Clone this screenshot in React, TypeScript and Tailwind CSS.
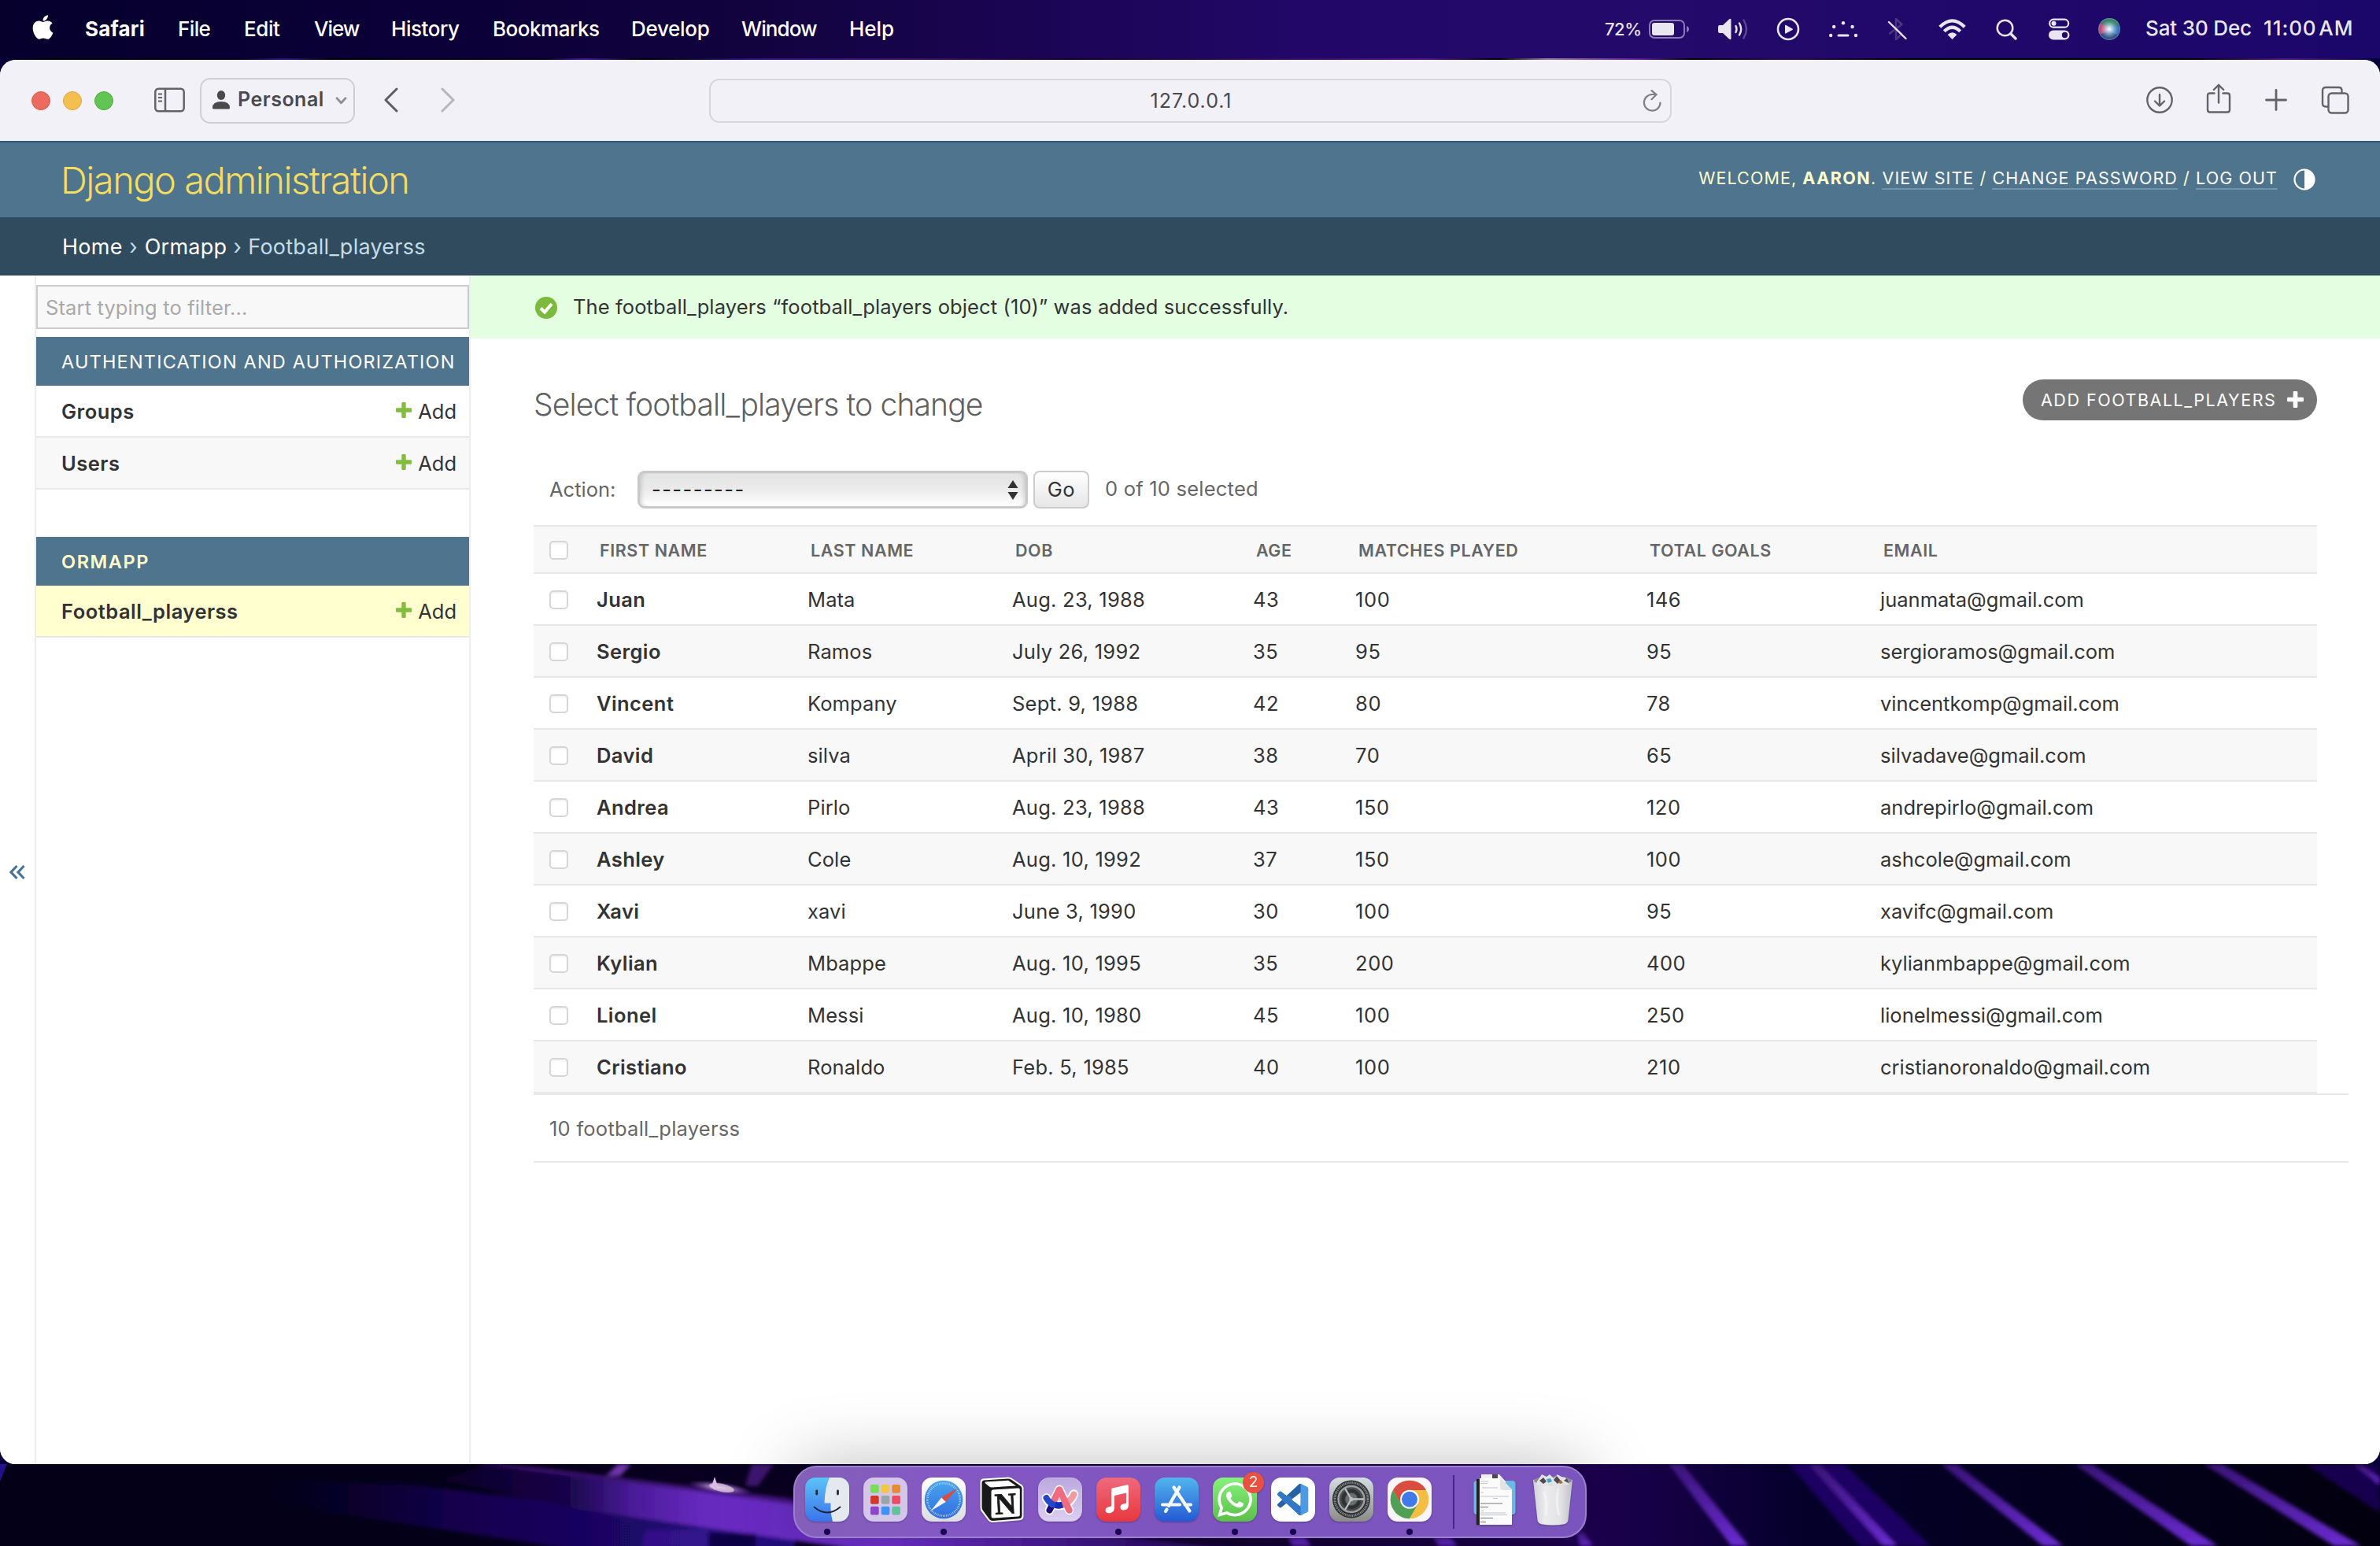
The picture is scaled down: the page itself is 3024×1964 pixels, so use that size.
import type { ReactNode } from "react";
import { FaApple, FaWhatsapp } from "react-icons/fa";

const players = [
  ["Juan", "Mata", "Aug. 23, 1988", "43", "100", "146", "juanmata@gmail.com"],
  ["Sergio", "Ramos", "July 26, 1992", "35", "95", "95", "sergioramos@gmail.com"],
  ["Vincent", "Kompany", "Sept. 9, 1988", "42", "80", "78", "vincentkomp@gmail.com"],
  ["David", "silva", "April 30, 1987", "38", "70", "65", "silvadave@gmail.com"],
  ["Andrea", "Pirlo", "Aug. 23, 1988", "43", "150", "120", "andrepirlo@gmail.com"],
  ["Ashley", "Cole", "Aug. 10, 1992", "37", "150", "100", "ashcole@gmail.com"],
  ["Xavi", "xavi", "June 3, 1990", "30", "100", "95", "xavifc@gmail.com"],
  ["Kylian", "Mbappe", "Aug. 10, 1995", "35", "200", "400", "kylianmbappe@gmail.com"],
  ["Lionel", "Messi", "Aug. 10, 1980", "45", "100", "250", "lionelmessi@gmail.com"],
  ["Cristiano", "Ronaldo", "Feb. 5, 1985", "40", "100", "210", "cristianoronaldo@gmail.com"],
];
const headings = ["FIRST NAME", "LAST NAME", "DOB", "AGE", "MATCHES PLAYED", "TOTAL GOALS", "EMAIL"];

/* ---------- macOS menu bar ---------- */

function MenuBar() {
  return (
    <header className="flex h-[74px] items-center justify-between bg-[linear-gradient(90deg,#05002c_0%,#0b0038_18%,#12033f_32%,#220768_55%,#230a6b_70%,#1b0669_100%)] text-[26px] font-medium text-white">
      <nav className="flex items-center pb-[2px]">
        <FaApple className="ml-[37px] mr-[36px] mt-[-3px] size-[35px]" />
        <span className="w-[118px] font-bold tracking-[0.200px]">Safari</span>
        <span className="w-[84px] tracking-[-0.600px]">File</span>
        <span className="w-[89px] tracking-[-0.400px]">Edit</span>
        <span className="w-[98px] tracking-[-1px]">View</span>
        <span className="w-[129px] tracking-[-0.450px]">History</span>
        <span className="w-[176px] tracking-[-0.480px]">Bookmarks</span>
        <span className="w-[140px] tracking-[-0.300px]">Develop</span>
        <span className="w-[137px] tracking-[-0.900px]">Window</span>
        <span className="tracking-[-0.100px]">Help</span>
      </nav>
      <div className="flex items-center text-[#e9e6f2]">
        <span className="w-[56px] text-[22px] tracking-[-0.500px]">72%</span>
        <svg className="mr-[35px] h-[24px] w-[52px]" viewBox="0 0 52 24" fill="none">
          <rect x="1" y="1" width="44" height="22" rx="6" stroke="#8b7bb5" strokeWidth="2" />
          <rect x="4" y="4" width="28" height="16" rx="3" fill="#e9e6f2" />
          <path d="M48 8c4 1.200 4 6.800 0 8z" fill="#8b7bb5" />
        </svg>
        <svg className="mr-[35px] h-[30px] w-[40px]" viewBox="0 0 40 30" fill="none" stroke="#e9e6f2" strokeWidth="2.400" strokeLinecap="round">
          <path d="M1 12q0-2 2-2h4l8-7.500q2.500-2 2.500 1v23q0 3-2.500 1l-8-7.500H3q-2 0-2-2z" fill="#e9e6f2" stroke="none" />
          <path d="M23.500 11q2 4 0 8M28 7.500q4.400 7.500 0 15" />
          <path d="M33.500 3.500q7 11.500 0 23" stroke="#5d4890" />
        </svg>
        <svg className="mr-[37px] size-[30px]" viewBox="0 0 30 30" fill="none">
          <circle cx="15" cy="15" r="13" stroke="#e9e6f2" strokeWidth="2.600" />
          <path d="M11 10.500v9.500q0 1 1 .500l8.500-4.500q1-.700 0-1.500L12 9.800q-1-.500-1 .700z" fill="#e9e6f2" />
        </svg>
        <svg className="mr-[37px] mt-[2px] h-[22px] w-[37px]" viewBox="0 0 37 22" fill="#e9e6f2">
          <circle cx="2.200" cy="18" r="2.200" />
          <circle cx="6.200" cy="7" r="2.200" />
          <circle cx="18" cy="2.200" r="2.200" />
          <circle cx="29.600" cy="7" r="2.200" />
          <circle cx="34" cy="18" r="2.200" />
          <rect x="10.500" y="16.600" width="15" height="3" rx="1.500" />
        </svg>
        <svg className="mr-[40px] h-[30px] w-[25px]" viewBox="0 0 25 30" fill="none" strokeLinecap="round" strokeLinejoin="round">
          <path d="M3 20.500 18.500 9 11 2v26l7.500-7L11 14.500" stroke="#4d3680" strokeWidth="2.400" />
          <path d="M2 6 23.500 27" stroke="#e9e6f2" strokeWidth="2.400" />
        </svg>
        <svg className="mr-[38px] mt-[-1px] h-[26px] w-[35px]" viewBox="0 0 35 26" fill="none" stroke="#e9e6f2" strokeWidth="4.200">
          <path d="M1.800 10.200q15.700-15.800 31.400 0" />
          <path d="M7.300 15.700q10.200-10 20.400 0" />
          <path d="M11.600 20q5.900-5.600 11.800 0l-5.900 6z" fill="#e9e6f2" stroke="none" />
        </svg>
        <svg className="mr-[39px] size-[27px]" viewBox="0 0 27 27" fill="none" stroke="#e9e6f2" strokeLinecap="round">
          <circle cx="11.500" cy="11.500" r="9.800" strokeWidth="2.500" />
          <path d="m19 19 6 6" strokeWidth="3.400" />
        </svg>
        <svg className="mr-[36px] h-[28px] w-[28px]" viewBox="0 0 28 28" fill="none">
          <rect x="2.200" y="1.700" width="24" height="10" rx="5" stroke="#e9e6f2" strokeWidth="2.200" />
          <circle cx="7.500" cy="6.700" r="3" fill="#e9e6f2" />
          <rect x="1" y="15.500" width="26.500" height="12" rx="6" fill="#e9e6f2" />
          <circle cx="21.500" cy="21.500" r="3.700" fill="#220969" />
        </svg>
        <svg className="mr-[32px] size-[28px]" viewBox="0 0 28 28">
          <defs>
            <radialGradient id="siriGlow" cx="0.500" cy="0.500" r="0.450">
              <stop offset="0" stopColor="#ffffff" />
              <stop offset="0.350" stopColor="#d6efff" stopOpacity="0.700" />
              <stop offset="1" stopColor="#8fd0ff" stopOpacity="0" />
            </radialGradient>
          </defs>
          <circle cx="14" cy="14" r="14" fill="#35507f" />
          <path d="M14 14Q1 8 3 5.500Q8 0 14 0Q24 0 26.500 8Q22 14 14 14z" fill="#3a7f62" />
          <path d="M14 14Q8 6 2 7Q-1 14 2 20Q8 20 14 14z" fill="#c94471" />
          <path d="M14 14Q20 8 27 10Q28 18 24 21Q18 20 14 14z" fill="#3873b8" />
          <circle cx="14" cy="14" r="13" fill="url(#siriGlow)" />
          <circle cx="14" cy="14" r="13.300" fill="none" stroke="#6ba0c8" strokeOpacity="0.500" strokeWidth="1.200" />
        </svg>
        <span className="mt-[-3px] w-[150px] whitespace-nowrap tracking-[-0.150px]">Sat 30 Dec</span>
        <span className="mt-[-3px] w-[148px] whitespace-nowrap tracking-[0.900px] [word-spacing:-5px]">11:00 AM</span>
      </div>
    </header>
  );
}

/* ---------- Safari toolbar ---------- */

function SafariToolbar() {
  return (
    <div className="flex h-[105px] items-center border-b-2 border-[#2f5573] bg-[#f2f1f7] text-[#646366]">
      <div className="flex w-[901px] items-center">
        <div className="ml-[40px] flex gap-4">
          <span className="size-[24px] rounded-full border border-[#d9564c] bg-[#ed6a5e]" />
          <span className="size-[24px] rounded-full border border-[#dba63c] bg-[#f5bf4f]" />
          <span className="size-[24px] rounded-full border border-[#52a83f] bg-[#61c554]" />
        </div>
        <svg className="ml-[52px] mt-[-1px] h-[32px] w-[39px]" viewBox="0 0 39 32" fill="none" stroke="currentColor" strokeWidth="2.500">
          <rect x="1.300" y="1.700" width="36.400" height="28.600" rx="4" />
          <path d="M14 2v28" />
          <path d="M5 8.500h5M5 13h5M5 17.500h5" strokeWidth="2" />
        </svg>
        <button className="ml-[19px] flex h-[58px] w-[197px] items-center rounded-[13px] border-2 border-[#cfced2] pl-[14px] text-[25px] font-semibold tracking-[0.500px] text-[#4a494c]">
          <svg className="mr-[10px] mt-[-2px] h-[24px] w-[22px]" viewBox="0 0 22 24" fill="currentColor">
            <ellipse cx="11" cy="6" rx="5.200" ry="6" />
            <path d="M0 22q0-8 11-8t11 8q0 1.500-1.500 1.500h-19Q0 23.500 0 22z" />
          </svg>
          <span className="mt-[-1px]">Personal</span>
          <svg className="ml-[14px] h-[10px] w-[15px]" viewBox="0 0 15 10" fill="none" stroke="#8f8e93" strokeWidth="2.800" strokeLinecap="round" strokeLinejoin="round">
            <path d="m2 1.800 5.500 6L13 1.800" />
          </svg>
        </button>
        <svg className="ml-[37px] mt-[-1px] h-[32px] w-[18px]" viewBox="0 0 18 32" fill="none" stroke="#5e5d60" strokeWidth="3" strokeLinecap="round" strokeLinejoin="round">
          <path d="M16 2 2 16l14 14" />
        </svg>
        <svg className="ml-[54px] mt-[-1px] h-[32px] w-[18px]" viewBox="0 0 18 32" fill="none" stroke="#b7b6ba" strokeWidth="3" strokeLinecap="round" strokeLinejoin="round">
          <path d="m2 2 14 14L2 30" />
        </svg>
      </div>
      <div className="relative flex h-[56px] w-[1223px] items-center justify-center rounded-[13px] border-2 border-[#d6d5da] pl-[2px] pt-[2px] text-[25px] tracking-[1px] text-[#4a494c]">
        127.0.0.1
        <svg className="absolute right-[11px] top-[12px] h-[28px] w-[24px]" viewBox="0 0 24 28" fill="none" stroke="#808084" strokeWidth="2.200" strokeLinecap="round" strokeLinejoin="round">
          <path d="M22.500 16.500A10.300 10.300 0 1 1 12 6h5.500" />
          <path d="m11.500 1.200 6 5-6 6" />
        </svg>
      </div>
      <svg className="ml-[602px] mt-[-2px] size-[36px]" viewBox="0 0 36 36" fill="none" stroke="currentColor" strokeWidth="2.400" strokeLinecap="round" strokeLinejoin="round">
        <circle cx="18" cy="18" r="15.700" />
        <path d="M18 11v14M12 19.500l6 6 6-6" />
      </svg>
      <svg className="ml-[41px] mt-[-5px] h-[38px] w-[32px]" viewBox="0 0 32 38" fill="none" stroke="currentColor" strokeWidth="2.400" strokeLinecap="round" strokeLinejoin="round">
        <path d="M10.500 12.500H5q-3 0-3 3v18q0 3 3 3h22q3 0 3-3v-18q0-3-3-3h-5.500" />
        <path d="M16 24.500V2M9.800 8 16 1.800 22.200 8" />
      </svg>
      <svg className="ml-[42px] mt-[-2px] size-[30px]" viewBox="0 0 30 30" fill="none" stroke="currentColor" strokeWidth="2.800" strokeLinecap="round">
        <path d="M15 2.500v25M2.500 15h25" />
      </svg>
      <svg className="ml-[42px] mt-[-2px] size-[36px]" viewBox="0 0 36 36" fill="none" stroke="currentColor" strokeWidth="2.400">
        <rect x="9.500" y="9.500" width="25" height="25" rx="4" />
        <path d="M9 26.500H6q-4 0-4-4V6q0-4 4-4h16.500q4 0 4 4v3" />
      </svg>
    </div>
  );
}

/* ---------- Django admin ---------- */

function DjangoHeader() {
  return (
    <>
      <div className="flex h-[95px] items-center justify-between bg-[#4f748e] pl-[77px] pr-[82px]">
        <h1 className="pt-[2px] text-[47px] font-[350] tracking-[-1.500px] text-[#f5dd5d]">Django administration</h1>
        <div className="mt-[-4px] flex items-center text-[21.500px] tracking-[1.080px] text-[#ffffcc]">
          <span className="whitespace-nowrap">
            WELCOME, <b className="font-bold tracking-[1.450px]">AARON</b>.{" "}
            <a className="border-b-2 border-[#7692a7] text-white">VIEW SITE</a> /{" "}
            <a className="border-b-2 border-[#7692a7] text-white">CHANGE PASSWORD</a> /{" "}
            <a className="border-b-2 border-[#7692a7] text-white">LOG OUT</a>
          </span>
          <svg className="ml-[20px] mt-[3px] size-[28px]" viewBox="0 0 28 28">
            <circle cx="14" cy="14" r="12.500" fill="none" stroke="#fff" strokeWidth="2.200" />
            <path d="M14 1.500a12.500 12.500 0 0 1 0 25z" fill="#fff" />
          </svg>
        </div>
      </div>
      <div className="flex h-[74px] items-center bg-[#2f4b5d] pl-[79px] pt-[3px] text-[27px] tracking-[0.250px] text-[#c4dce8]">
        <span className="text-white">Home</span>
        <span className="w-[28px] text-center">›</span>
        <span className="text-white">Ormapp</span>
        <span className="w-[27px] text-center">›</span>
        <span>Football_playerss</span>
      </div>
    </>
  );
}

function PlusMark({ className }: { className: string }) {
  return (
    <svg className={className} viewBox="0 0 22 22" fill="currentColor">
      <path d="M9.500 1h3q1.200 0 1.200 1.200v6.100h6.100Q21 8.300 21 9.500v3q0 1.200-1.200 1.200h-6.100v6.100q0 1.200-1.200 1.200h-3q-1.200 0-1.200-1.200v-6.100H2.200Q1 13.700 1 12.500v-3q0-1.200 1.200-1.200h6.100V2.200Q8.300 1 9.500 1z" />
    </svg>
  );
}

function SideRow({ name, tone }: { name: string; tone: string }) {
  return (
    <div className={`flex h-[66px] items-center justify-between border-b-2 border-[#e8e8e8] pl-8 pr-4 pt-[2px] text-[25.500px] text-[#333] ${tone}`}>
      <span className="font-semibold tracking-[0.500px]">{name}</span>
      <span className="flex items-center">
        <PlusMark className="mr-[7px] mt-[-4px] size-[22px] text-[#84bc40]" />
        Add
      </span>
    </div>
  );
}

function Sidebar() {
  return (
    <aside className="flex w-[598px] border-r-2 border-[#ededed] bg-white">
      <div className="flex w-[46px] items-center justify-center border-r-2 border-[#ededed] pt-[6px]">
        <svg className="size-[24px]" viewBox="0 0 24 24" fill="none" stroke="#4a7390" strokeWidth="3.200">
          <path d="M11.500 4 4 12l7.500 8M20.500 4 13 12l7.500 8" />
        </svg>
      </div>
      <div className="flex-1 pt-3">
        <input
          className="block h-[56px] w-full border-2 border-[#ccc] bg-[#f8f8f8] pl-[10px] text-[25.500px] tracking-[0.130px] placeholder:text-[#a9a9a9]"
          placeholder="Start typing to filter..."
        />
        <section className="mt-[10px]">
          <h2 className="flex h-[62px] items-center whitespace-nowrap bg-[#4f748e] pl-8 pt-[2px] text-[23.500px] tracking-[1.180px] text-white">AUTHENTICATION AND AUTHORIZATION</h2>
          <SideRow name="Groups" tone="bg-white" />
          <SideRow name="Users" tone="bg-[#f8f8f8]" />
        </section>
        <section className="mt-[60px]">
          <h2 className="flex h-[62px] items-center bg-[#4f748e] pl-8 pt-[2px] text-[23.500px] font-semibold tracking-[1.600px] text-[#ffffcc]">ORMAPP</h2>
          <SideRow name="Football_playerss" tone="bg-[#ffffd0]" />
        </section>
      </div>
    </aside>
  );
}

function Check() {
  return <input type="checkbox" className="ml-[20px] block size-[24px] appearance-none rounded-[5px] border-2 border-[#d6d6d6] bg-white shadow-[inset_0_2px_2px_rgba(0,0,0,0.050)]" />;
}

function PlayerTable() {
  return (
    <div className="w-[2266px] text-[25.500px] text-[#333]">
      <div className="grid h-[62px] grid-cols-[80px_268px_260px_306px_130px_370px_297px_1fr] items-center border-y-2 border-[#e8e8e8] bg-[#f8f8f8] pt-[2px] text-[21.500px] font-semibold tracking-[0.580px] text-[#666]">
        <Check />
        {headings.map((h) => (
          <span key={h} className="pl-1">{h}</span>
        ))}
      </div>
      {players.map(([first, last, dob, age, matches, goals, email]) => (
        <div key={first} className="grid h-[66px] grid-cols-[80px_268px_260px_306px_130px_370px_297px_1fr] items-center border-b-2 border-[#e8e8e8] pt-[2px] even:bg-white odd:bg-[#f8f8f8]">
          <Check />
          <span className="font-semibold tracking-[0.420px]">{first}</span>
          <span className="tracking-[0.100px]">{last}</span>
          <span className="tracking-[0.250px]">{dob}</span>
          <span className="tracking-[0.500px]">{age}</span>
          <span className="tracking-[0.600px]">{matches}</span>
          <span className="tracking-[0.500px]">{goals}</span>
          <span>{email}</span>
        </div>
      ))}
    </div>
  );
}

function Content() {
  return (
    <main className="flex-1 bg-white">
      <div className="flex h-[80px] items-center bg-[#e3fee0] pl-[82px] pt-px text-[25.500px] tracking-[0.110px] text-[#333]">
        <svg className="mr-[20px] size-[28px]" viewBox="0 0 28 28">
          <circle cx="14" cy="14" r="14" fill="#7cba3d" />
          <path d="m7 14.500 5 5 9-10.500" fill="none" stroke="#fff" strokeWidth="4" />
        </svg>
        The football_players “football_players object (10)” was added successfully.
      </div>
      <div className="pl-20">
        <div className="flex h-[168px] w-[2266px] items-start justify-between pt-[52px]">
          <h2 className="mt-[2px] text-[39px] font-[350] leading-[60px] tracking-[-0.850px] text-[#606060]">Select football_players to change</h2>
          <a className="flex h-[52px] w-[374px] items-center rounded-full bg-[#757575] pl-[23px] text-[21.500px] tracking-[1.530px] text-white">
            ADD FOOTBALL_PLAYERS
            <PlusMark className="ml-[13px] mt-[-1px] size-[23px]" />
          </a>
        </div>
        <div className="flex h-[69px] items-start pl-5 text-[25.500px] text-[#666]">
          <label className="flex h-[48px] w-[112px] items-center pt-px">Action:</label>
          <div className="relative mr-[7px] h-[48px] w-[496px]">
            <select className="size-full appearance-none rounded-[9px] border-[3px] border-[#c9c9c9] bg-[linear-gradient(180deg,#e4e4e4,#ebebeb_50%,#fff)] pl-[15px] tracking-[1.450px] text-[#222] shadow-[inset_5px_0_5px_-3px_rgba(0,0,0,0.150),inset_-5px_0_5px_-3px_rgba(0,0,0,0.150)]">
              <option>---------</option>
            </select>
            <svg className="absolute right-[12px] top-[12px] h-[25px] w-[14px]" viewBox="0 0 14 25" fill="#333">
              <path d="M7 0 13.500 10H.500zM7 25 .500 15h13z" />
            </svg>
          </div>
          <button className="mr-[20px] h-[48px] w-[71px] rounded-[8px] border-2 border-[#ccc] bg-[linear-gradient(180deg,#fff,#e6e6e6)] tracking-[0.600px] text-[#333]">Go</button>
          <span className="mt-[-1px] flex h-[48px] items-center tracking-[0.220px]">0 of 10 selected</span>
        </div>
        <PlayerTable />
        <div className="flex h-[88px] w-[2306px] items-center border-y-2 border-[#e8e8e8] pl-5 pt-[2px] text-[25.500px] tracking-[0.250px] text-[#666]">10 football_playerss</div>
      </div>
    </main>
  );
}

/* ---------- Dock ---------- */

function Finder() {
  return (
    <svg viewBox="0 0 56 56" className="size-[56px]">
      <defs>
        <linearGradient id="finderBlue" x1="0" y1="0" x2="0" y2="1">
          <stop stopColor="#5cc3f7" />
          <stop offset="1" stopColor="#3b72ec" />
        </linearGradient>
        <clipPath id="finderClip"><rect width="56" height="56" rx="13" /></clipPath>
      </defs>
      <g clipPath="url(#finderClip)">
        <rect width="56" height="56" fill="url(#finderBlue)" />
        <path d="M31 0q-6 13-6.500 32.500h8Q32 45 35 56h21V0z" fill="#e4e8ef" />
      </g>
      <path d="M14.700 17v4M41.500 17v4" stroke="#1f2b3a" strokeWidth="2.800" strokeLinecap="round" />
      <path d="M11.500 37.500q16.500 14 33 0" fill="none" stroke="#1b2330" strokeWidth="1.800" strokeLinecap="round" />
    </svg>
  );
}

const tiles = [
  { x: 9, y: 9, c: "#79dd5a" }, { x: 22.7, y: 9, c: "#f4c547" }, { x: 36.3, y: 9, c: "#e78b35" },
  { x: 9, y: 23, c: "#cf382b" }, { x: 22.7, y: 23, c: "#9aa5aa" }, { x: 36.3, y: 23, c: "#ee4b60" },
  { x: 9, y: 36.8, c: "#8f45c8" }, { x: 22.7, y: 36.8, c: "#3f93f5" }, { x: 36.3, y: 36.8, c: "#62c29b" },
];

function Launchpad() {
  return (
    <svg viewBox="0 0 56 56" className="size-[56px]">
      <rect width="56" height="56" rx="13" fill="#d3c6ea" />
      {tiles.map((t) => (
        <rect key={t.c} x={t.x} y={t.y} width="10.700" height="10.700" rx="2" fill={t.c} />
      ))}
    </svg>
  );
}

function SafariIcon() {
  return (
    <svg viewBox="0 0 56 56" className="size-[56px]">
      <defs>
        <linearGradient id="safariBlue" x1="0" y1="0" x2="0" y2="1">
          <stop stopColor="#4aa6ee" />
          <stop offset="1" stopColor="#2f6de0" />
        </linearGradient>
        <linearGradient id="safariPlate" x1="0" y1="0" x2="0" y2="1">
          <stop stopColor="#ffffff" />
          <stop offset="1" stopColor="#dcdce2" />
        </linearGradient>
      </defs>
      <rect width="56" height="56" rx="13" fill="url(#safariPlate)" />
      <circle cx="28" cy="28" r="24.300" fill="url(#safariBlue)" />
      <circle cx="28" cy="28" r="20.700" fill="none" stroke="#d5e8fb" strokeWidth="2.600" strokeDasharray="0.700 1.467" />
      <path d="M45.500 13.500 30.800 31 25.200 25.400z" fill="#e0493e" />
      <path d="M11.500 42.500 25.200 25.400l5.600 5.600z" fill="#f2f4f7" />
    </svg>
  );
}

function Notion() {
  return (
    <svg viewBox="0 0 56 58" className="h-[58px] w-[56px]">
      <path d="M4 2.500 36 .500q3 0 5.500 2l12 8q2 1.500 2 4V50q0 5-5 5.300L17 58q-4 .300-6.300-2.500L2 44q-1.500-2-1.500-5V7q0-4 3.500-4.500z" fill="#fff" />
      <path d="M5 4.500 36 2.500q2.500 0 4.500 1.500l11.500 8q1.500 1 1.500 3v34q0 4-3.500 4.200L17 56q-3 .300-5-2L4 43q-1.500-2-1.500-4.500V8q0-3 2.500-3.500z" fill="#191919" />
      <path d="M7 6.500 36 4.800l10 6.700-31 2q-1.500 0-3-1L6.500 8z" fill="#fff" />
      <path d="M16.500 16.500 49 14.500q1.800 0 1.800 2V48.500q0 1.800-1.800 2L17 52.500q-2.500 0-2.500-2.500V19q0-2.300 2-2.500z" fill="#fff" />
      <text x="32.500" y="47" textAnchor="middle" fontFamily="Liberation Serif, serif" fontWeight="700" fontSize="38" fill="#191919" stroke="#191919" strokeWidth="0.800" transform="rotate(-3 32.500 34)">N</text>
    </svg>
  );
}

function ArcIcon() {
  return (
    <svg viewBox="0 0 56 56" className="size-[56px]">
      <defs>
        <linearGradient id="arcPlate" x1="0" y1="0" x2="0" y2="1">
          <stop stopColor="#bba8de" />
          <stop offset="1" stopColor="#dccff0" />
        </linearGradient>
      </defs>
      <rect x="0.500" y="0.500" width="55" height="55" rx="13" fill="url(#arcPlate)" stroke="#cbbcea" />
      <g fill="none" strokeLinecap="round" strokeLinejoin="round">
        <path d="M10.500 26q5 9.500 17 9.500T45.500 21M14.500 41.500l12.500-26 12.500 26" stroke="#fff" strokeWidth="11.500" />
        <path d="M27.500 35.500q12-1.500 18-14" stroke="#f09ba0" strokeWidth="8" />
        <path d="M14.500 41.500l4-8" stroke="#1b0d80" strokeWidth="8" />
        <path d="M18 33.500 27 15.500l12.500 26" stroke="#ef6b80" strokeWidth="8.500" />
        <path d="M10.500 26q5 9.500 16 9.500" stroke="#2347c9" strokeWidth="8" />
        <path d="M22 35q5 1 9-.500" stroke="#1330b4" strokeWidth="8" strokeLinecap="butt" />
      </g>
      <path d="M24.500 29.500 27 24.500l2.500 5z" fill="#cfc0ea" />
    </svg>
  );
}

function Music() {
  return (
    <svg viewBox="0 0 56 56" className="size-[56px]">
      <defs>
        <linearGradient id="musicRed" x1="0" y1="0" x2="0" y2="1">
          <stop stopColor="#ee6a7c" />
          <stop offset="1" stopColor="#e8373f" />
        </linearGradient>
      </defs>
      <rect width="56" height="56" rx="13" fill="url(#musicRed)" />
      <path d="M20.500 13.500 39.500 9.200q1.300-.200 1.300 1V35.500q0 5-5 5.800-5.300.700-5.300-3.500 0-3.300 4-4.200l2.500-.600q1-.200 1-1.300V19.500L22.800 23v16q0 5-5.200 6.200-6 .800-6-3.700 0-3.300 4.300-4.300l2.200-.500q1.200-.300 1.200-1.500V15q0-1.200 1.200-1.500z" fill="#fff" />
    </svg>
  );
}

function AppStore() {
  return (
    <svg viewBox="0 0 56 56" className="size-[56px]">
      <defs>
        <linearGradient id="storeBlue" x1="0" y1="0" x2="0" y2="1">
          <stop stopColor="#52b5ee" />
          <stop offset="1" stopColor="#2459d4" />
        </linearGradient>
      </defs>
      <rect width="56" height="56" rx="13" fill="url(#storeBlue)" />
      <g stroke="#f5f8fc" strokeWidth="4.200" strokeLinecap="round">
        <path d="M31.500 12.500 18 36M10 34.500h22M38.500 34.500h7.500M24.500 12.500 44.500 42.500M15.500 40.500l-1.500 2.500" />
      </g>
    </svg>
  );
}

function WhatsApp() {
  return (
    <div className="relative flex size-[56px] items-center justify-center rounded-[13px] bg-[linear-gradient(180deg,#86f27c,#5bbf4a)]">
      <FaWhatsapp className="size-[50px] text-white" />
      <span className="absolute -right-[9px] -top-[7px] flex size-[27px] items-center justify-center rounded-full bg-[#e9503f] text-[19px] text-white">2</span>
    </div>
  );
}

function VSCode() {
  return (
    <svg viewBox="0 0 56 56" className="size-[56px]">
      <defs>
        <clipPath id="codeClip">
          <path
            clipRule="evenodd"
            d="M70.900 99.300c1.600.600 3.400.600 5-.200l20.600-9.900c2.100-1 3.500-3.200 3.500-5.600V16.400c0-2.400-1.400-4.600-3.500-5.600L75.900.900c-2.100-1-4.600-.800-6.400.500-.300.200-.500.400-.700.700L29.400 38 12.200 25c-1.600-1.200-3.800-1.100-5.300.200l-5.500 5c-1.900 1.700-1.900 4.500 0 6.200L16.200 50 1.400 63.600c-1.900 1.600-1.900 4.500 0 6.100l5.500 5c1.500 1.400 3.700 1.500 5.300.300l17.200-13 39.400 35.900c.600.600 1.300 1.100 2.100 1.400zM75 27.300 45.100 50 75 72.700z"
          />
        </clipPath>
      </defs>
      <rect width="56" height="56" rx="13" fill="#fff" />
      <g transform="translate(8 8) scale(0.395 0.400)">
        <g clipPath="url(#codeClip)">
          <rect width="100" height="100" fill="#2663a5" />
          <path d="M0 20h14L80 70v30H66L0 38z" fill="#3278c6" />
          <path d="M75 0h25v100H75z" fill="#4b9ae6" />
        </g>
      </g>
    </svg>
  );
}

function Settings() {
  return (
    <svg viewBox="0 0 56 56" className="size-[56px]">
      <defs>
        <linearGradient id="gearPlate" x1="0" y1="0" x2="0" y2="1">
          <stop stopColor="#d4dde3" />
          <stop offset="1" stopColor="#8b8b88" />
        </linearGradient>
      </defs>
      <rect width="56" height="56" rx="13" fill="url(#gearPlate)" />
      <circle cx="28" cy="27.500" r="24" fill="#2d2f30" />
      <circle cx="28" cy="27.500" r="21" fill="none" stroke="#8d9294" strokeWidth="3" strokeDasharray="1.200 1" />
      <circle cx="28" cy="27.500" r="16.500" fill="#4b4d4d" stroke="#9da3a5" strokeWidth="2.400" />
      <circle cx="28" cy="27.500" r="10.500" fill="none" stroke="#2f3132" strokeWidth="4" />
      <circle cx="28" cy="27.500" r="7.500" fill="#6b6e6e" />
      <path d="M28 27.500h16M28 27.500 20 14M28 27.500 20 41" stroke="#b9c0c3" strokeWidth="2.400" />
      <circle cx="28" cy="27.500" r="2.600" fill="#b9c0c3" />
    </svg>
  );
}

function Chrome() {
  return (
    <svg viewBox="0 0 56 56" className="size-[56px]">
      <defs>
        <clipPath id="chromeClip"><circle cx="28" cy="28" r="24.300" /></clipPath>
      </defs>
      <rect width="56" height="56" rx="13" fill="#f7f4fb" />
      <g clipPath="url(#chromeClip)">
        <rect width="56" height="56" fill="#f3be42" />
        <path d="M28 28 17.600 34 6.900 15.500-5 15.500V60h32.700v-7.500L38.400 34z" fill="#4f9f57" />
        <path d="M28 28 17.600 34 6.900 15.500V0H56v16H28z" fill="#d84d40" />
      </g>
      <circle cx="28" cy="27.800" r="12" fill="#fff" />
      <circle cx="28" cy="27.800" r="10" fill="#4079ea" />
    </svg>
  );
}

function Documents() {
  return (
    <svg viewBox="0 0 54 68" className="h-[68px] w-[54px]">
      <rect x="0.500" y="10" width="53" height="43" rx="4" fill="#6bb9e6" />
      <path d="M10 2h23l8 9v50H10z" fill="#f1f1f3" />
      <path d="M24 2h7v5h-7z" fill="#4c4c50" />
      <path d="M4 8h5v58H4z" fill="#222" />
      <path d="M8 7h27l14 15v44H8z" fill="#fbfbfc" />
      <path d="M34 6v12q0 4 4 4h12z" fill="#e3e3e6" />
      <g stroke="#b4b7bc" strokeWidth="0.800">
        <path d="M9 11h10M9 13.500h9M11 19h20M9 25h4M9 30h36M25 32.500h6M9 51h32M9 53.500h34M9 48.500h4" />
      </g>
      <g stroke="#74777d" strokeWidth="1.200">
        <path d="M9 39h28M9 43.500h10M9 57.500h16M9 62.500h7" />
      </g>
    </svg>
  );
}

function Trash() {
  return (
    <svg viewBox="0 0 52 68" className="h-[68px] w-[52px]">
      <defs>
        <linearGradient id="binBody" x1="0" y1="0" x2="1" y2="0">
          <stop stopColor="#cfcfd6" />
          <stop offset="0.300" stopColor="#ececee" />
          <stop offset="0.700" stopColor="#e2e2e5" />
          <stop offset="1" stopColor="#bfbfc8" />
        </linearGradient>
      </defs>
      <path d="M1 9q25-7 50 0l-5.500 51q-.800 4.500-5 5.200-14.500 2.500-29 0-4.200-.700-5-5.200z" fill="url(#binBody)" />
      <ellipse cx="26" cy="10" rx="24" ry="5.500" fill="#8f899c" />
      <path d="M6 11 12 2l6 3 4-3 5 5 5-5 5 3 5 1 4 9-10 0-6 2-7-2-8 2-10-2z" fill="#e4e3e8" />
      <path d="m9 10 5-4 4 5-4 3zM27 9l4-5 5 6-4 4zM40 10l4-3 2 6z" fill="#4f4a50" />
      <path d="m18 8 5-1 2 4-5 2z" fill="#3fa5c4" />
      <path d="m33 12 3-3 3 4-4 1z" fill="#b06a3c" />
      <path d="M14 24q6 10 3 30M33 20q-4 16 1 34" fill="none" stroke="#f8f8fa" strokeWidth="3" strokeOpacity="0.600" />
    </svg>
  );
}

function DockItem({ children, open }: { children: ReactNode; open?: boolean }) {
  return (
    <div className="flex h-[73px] w-[74px] flex-col items-center justify-between">
      <div className="flex h-[56px] items-center drop-shadow-[0_1px_1px_rgba(0,0,0,0.250)]">{children}</div>
      {open && <span className="size-[8px] rounded-full bg-[#16004f]" />}
    </div>
  );
}

function Dock() {
  return (
    <div className="absolute left-[1008px] top-[2px] flex h-[92px] w-[1008px] rounded-[30px] border-2 border-[#9c7fce] bg-[linear-gradient(100deg,#8460b8_0%,#8458c4_20%,#7c54bd_55%,#7b55be_100%)] pl-[4px] pt-[13px] shadow-[0_0_90px_rgba(0,0,0,0.270)]">
      <DockItem open><Finder /></DockItem>
      <DockItem><Launchpad /></DockItem>
      <DockItem open><SafariIcon /></DockItem>
      <DockItem><Notion /></DockItem>
      <DockItem><ArcIcon /></DockItem>
      <DockItem open><Music /></DockItem>
      <DockItem><AppStore /></DockItem>
      <DockItem open><WhatsApp /></DockItem>
      <DockItem open><VSCode /></DockItem>
      <DockItem><Settings /></DockItem>
      <DockItem open><Chrome /></DockItem>
      <div className="ml-[18px] mr-[14px] mt-[-3px] h-[68px] w-[2px] bg-[#4a2391]" />
      <DockItem><Documents /></DockItem>
      <DockItem><Trash /></DockItem>
    </div>
  );
}

function DesktopStrip() {
  return (
    <footer className="relative h-[104px]">
      <svg className="block h-[104px] w-[3024px]" viewBox="0 0 3024 104" preserveAspectRatio="none">
        <defs>
          <linearGradient id="night" x1="0" x2="1" y1="0" y2="0">
            <stop stopColor="#030018" />
            <stop offset="0.200" stopColor="#040018" />
            <stop offset="0.500" stopColor="#10002e" />
            <stop offset="0.670" stopColor="#1d0050" />
            <stop offset="0.760" stopColor="#04002a" />
            <stop offset="1" stopColor="#02000e" />
          </linearGradient>
          <linearGradient id="beam" gradientUnits="userSpaceOnUse" x1="560" x2="1500" y1="0" y2="0">
            <stop stopColor="#0a0124" />
            <stop offset="0.170" stopColor="#170548" />
            <stop offset="0.260" stopColor="#4a1b98" />
            <stop offset="0.350" stopColor="#6529bd" />
            <stop offset="0.600" stopColor="#7232d4" />
            <stop offset="1" stopColor="#2a0a66" />
          </linearGradient>
          <linearGradient id="dimBeam" gradientUnits="userSpaceOnUse" x1="330" x2="1010" y1="0" y2="0">
            <stop stopColor="#0a0230" stopOpacity="0" />
            <stop offset="0.350" stopColor="#12034a" />
            <stop offset="1" stopColor="#240a80" />
          </linearGradient>
          <linearGradient id="ray" x1="0" x2="0" y1="0" y2="1">
            <stop stopColor="#3a1478" />
            <stop offset="1" stopColor="#6a2bd0" />
          </linearGradient>
          <radialGradient id="spark">
            <stop stopColor="#efe6f5" />
            <stop offset="0.400" stopColor="#b98fd6" stopOpacity="0.700" />
            <stop offset="1" stopColor="#7a2fc0" stopOpacity="0" />
          </radialGradient>
          <filter id="soften" x="-5%" y="-20%" width="110%" height="140%">
            <feGaussianBlur stdDeviation="2.500" />
          </filter>
        </defs>
        <rect width="3024" height="104" fill="url(#night)" />
        <path d="M0 0h9L0 22z" fill="#22108a" />
        <g filter="url(#soften)">
          <path d="M330 20 520 26 1010 84V110H740L330 48z" fill="url(#dimBeam)" />
          <path d="M620 0 1010 50 1600 110H1100L740 58 560 20z" fill="url(#beam)" />
          <path d="M600 -2 680 4 1010 44v8L840 28z" fill="#571c9a" fillOpacity="0.700" />
          <path d="M785 0h17l-14 15h-18z" fill="#6d35a8" />
          <path d="M955 0h28l-20 28h-16z" fill="#3d1670" />
          <path d="M820 84 900 82v26h-85z" fill="#4b1fae" fillOpacity="0.450" />
          <path d="M900 88h60v18h-60z" fill="#0d0338" fillOpacity="0.800" />
        </g>
        <ellipse cx="915" cy="30" rx="42" ry="8" fill="url(#spark)" transform="rotate(8 915 30)" />
        <ellipse cx="917" cy="30" rx="16" ry="5" fill="#d9c3dd" fillOpacity="0.800" transform="rotate(12 917 30)" />
        <path d="M908 16l4 12-4 5-4-5z" fill="#d9b9e6" />
        <g filter="url(#soften)" fill="url(#ray)">
          <path d="M2120 0h18l84 104h-22z" />
          <path d="M2273 0h70l110 104h-90z" fill="#1e0562" />
          <path d="M2298 0h14l98 104h-16z" />
          <path d="M2466 0h20l136 104h-26z" />
          <path d="M2636 0h22l160 104h-34z" />
          <path d="M2800 0h24l176 104h-34z" />
          <path d="M2930 0h94v62z" fill="#16044e" />
          <path d="M2990 0h8l26 18v8z" />
          <path d="M1636 92h22l8 12h-24zM1820 92h22l10 12h-24zM2002 86h10l12 18h-16z" />
        </g>
      </svg>
      <Dock />
    </footer>
  );
}

export default function App() {
  return (
    <div className="flex h-[1964px] w-[3024px] flex-col overflow-hidden bg-[#05003a] font-['Inter',sans-serif]">
      <MenuBar />
      <div className="h-[2px] bg-[linear-gradient(90deg,#060040_0%,#000_2%,#05001e_10%,#2d1078_12%,#000_14%,#08001e_23%,#3a1690_24.500%,#000_27%,#2a1080_32%,#3c1060_38%,#12002a_45%,#4a1480_60%,#000_63%,#8f7a9a_65%,#5a1a90_69%,#000_71%,#2a0850_75%,#000_80%,#000_92%,#4a1480_96%,#060040_100%)]" />
      <div className="flex h-[1784px] flex-col overflow-hidden rounded-[20px] bg-white">
        <SafariToolbar />
        <DjangoHeader />
        <div className="flex flex-1">
          <Sidebar />
          <Content />
        </div>
      </div>
      <DesktopStrip />
    </div>
  );
}
